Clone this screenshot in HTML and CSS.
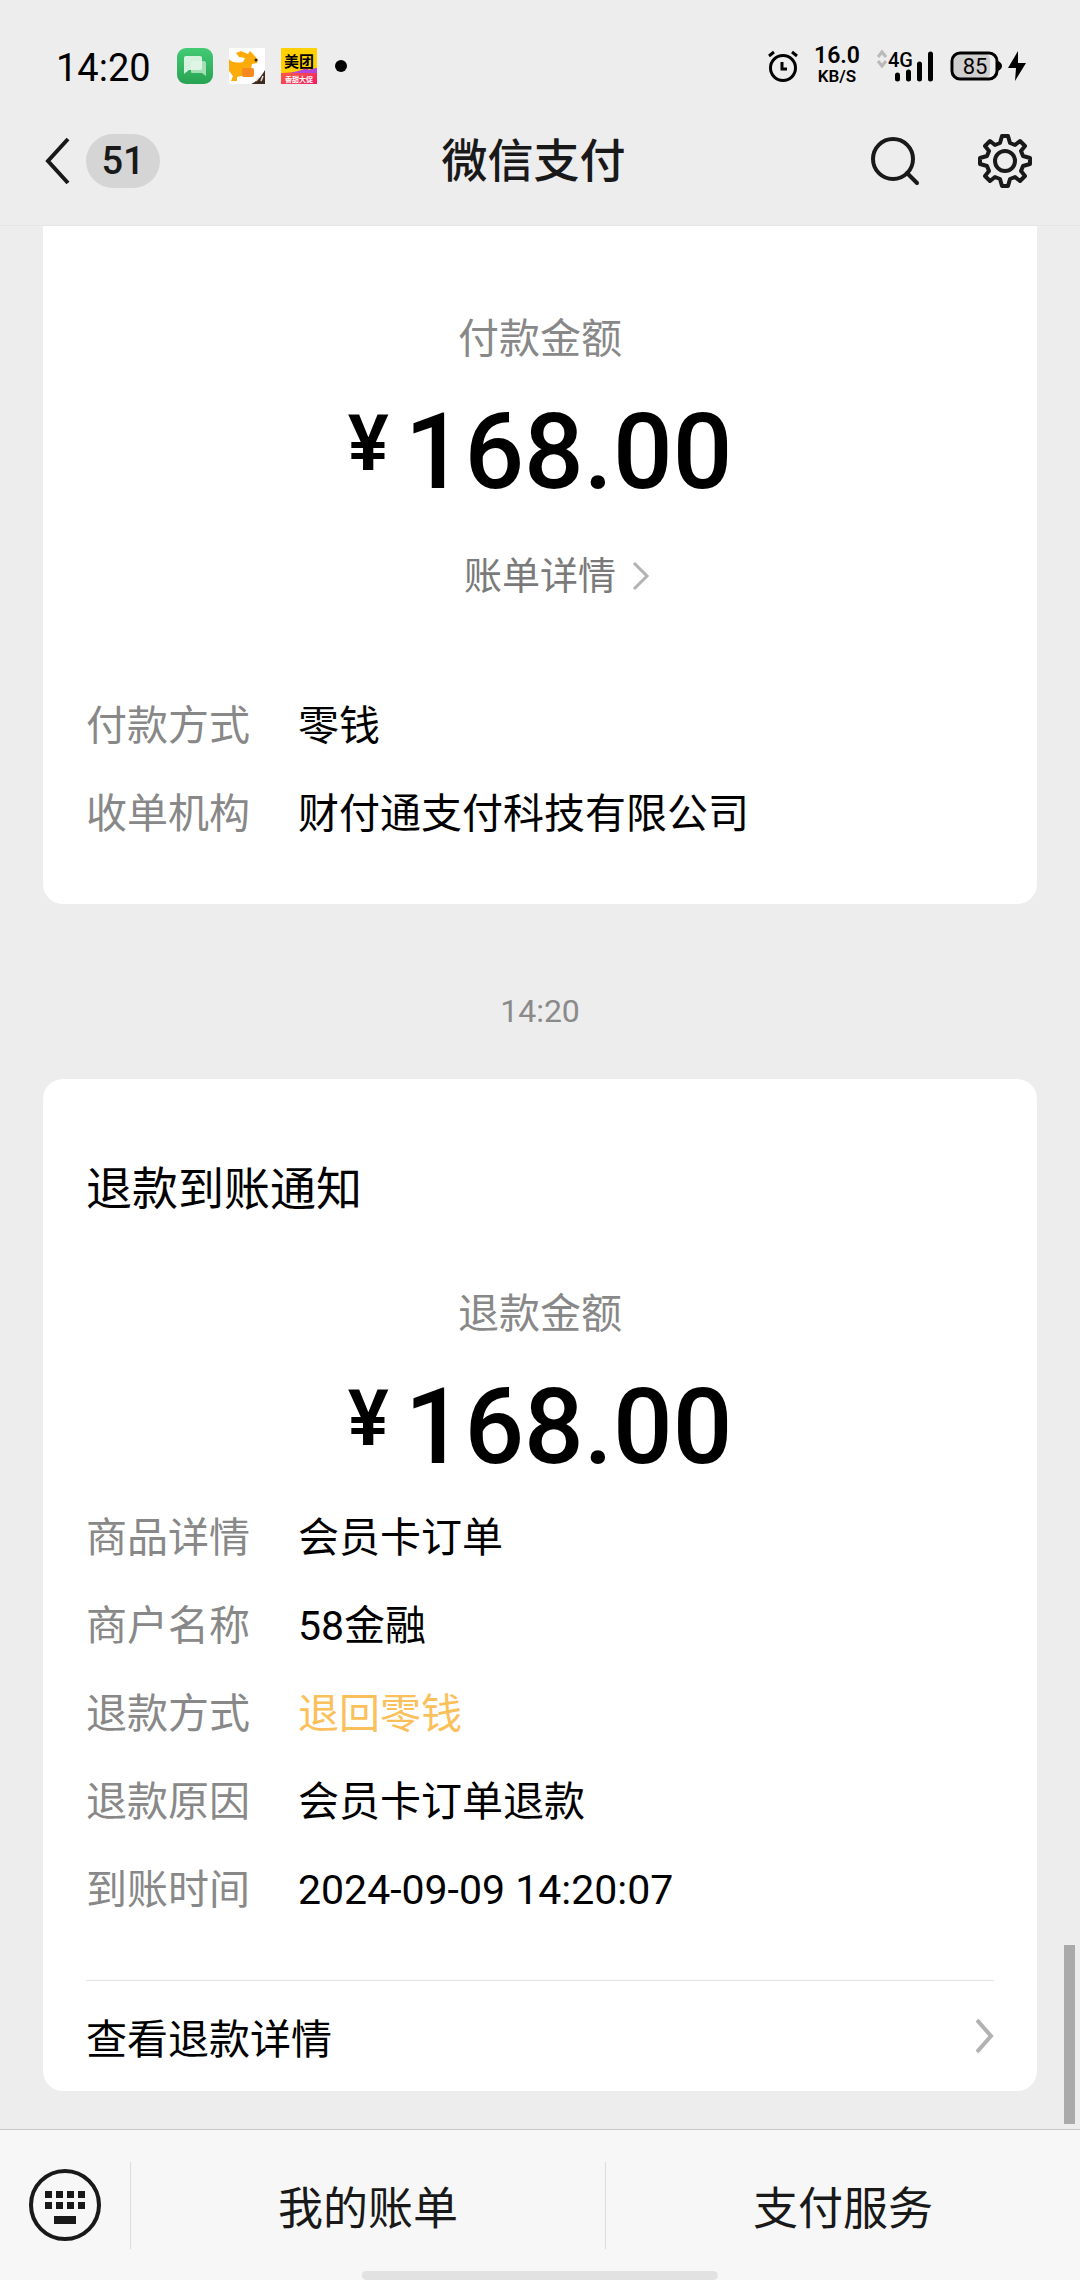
FILE: index.html
```html
<!DOCTYPE html>
<html lang="zh-CN">
<head>
<meta charset="utf-8">
<meta name="viewport" content="width=device-width, initial-scale=1">
<title>微信支付</title>
<link rel="stylesheet" href="styles.css">
</head>
<body>
<div class="screen">
  <div class="status">
    <span class="status-time">14:20</span>
    <div class="status-apps">
      <svg width="36" height="36" viewBox="0 0 36 36" aria-hidden="true">
        <defs><linearGradient id="msg" x1="0" y1="0" x2="0" y2="1"><stop offset="0" stop-color="#43cb74"/><stop offset="1" stop-color="#27a352"/></linearGradient></defs>
        <rect width="36" height="36" rx="9" fill="url(#msg)"/>
        <path d="M15 13h12q2 0 2 2v13l-4-3H15q-1 0-1-1v-9z" fill="#a5dfb6"/>
        <path d="M9 8h14q2 0 2 2v10q0 2-2 2H12l-5 4V10q0-2 2-2z" fill="#e6f7ea" opacity=".9"/>
      </svg>
      <svg width="36" height="36" viewBox="0 0 36 36" aria-hidden="true">
        <rect width="36" height="36" fill="#fff"/>
        <path d="M0 11c3 4 8 4 14 3l2-4-6-1-3-4 5-2 7 3 2-3 4 4 4 5-1 3-5 1-1 5-3 8-7-1-4 1v4H2l2-5-4-5z" fill="#fcab0b"/>
        <rect x="13" y="20" width="12" height="9" rx="2" fill="#f58a1f"/>
        <circle cx="27" cy="12" r="1.500" fill="#33210f"/>
        <path d="M36 22v14H22q8-3 14-14z" fill="#3f2a1e"/>
        <path d="M27 33l3-4m2 4 2-5" stroke="#e7ddd5" stroke-width="1.500"/>
      </svg>
      <svg width="36" height="36" viewBox="0 0 36 36" aria-hidden="true">
        <defs><linearGradient id="mt" x1="0" y1="0" x2="1" y2="1"><stop offset="0" stop-color="#ff6b3a"/><stop offset="1" stop-color="#f01a6a"/></linearGradient></defs>
        <rect width="36" height="36" fill="#ffd100"/>
        <path d="M0 25l17-1 8-4 3 2 8-2v16H0z" fill="url(#mt)"/>
        <path d="M9 25l16-4 3 1 8-2v5z" fill="#b246e0"/>
        <text x="18" y="19" class="app-name">美团</text>
        <text x="18" y="34" class="app-tag">香甜大促</text>
      </svg>
      <svg width="14" height="12" viewBox="0 0 14 12" aria-hidden="true"><circle cx="8" cy="6" r="6"/></svg>
    </div>
    <div class="status-system">
      <svg width="30" height="34" viewBox="0 0 30 34" fill="none" stroke="#000" stroke-width="3" aria-hidden="true">
        <circle cx="15" cy="19" r="12.500"/><path d="M14 13v7h5M1 7l5-4M29 7l-5-4"/>
      </svg>
      <div class="net-speed"><span class="net-value">16.0</span><span class="net-unit">KB/S</span></div>
      <svg width="58" height="34" viewBox="0 0 58 34" aria-hidden="true">
        <path d="M2 8l4-5 4 5M2 12l4 5 4-5" fill="none" stroke="#b9b9b9" stroke-width="3"/>
        <text x="12" y="18" class="signal-type">4G</text>
        <path d="M21.500 26v4M32.500 23v7M43.500 15v15M54.500 5v25" stroke="#000" stroke-width="5" stroke-linecap="round"/>
      </svg>
      <svg width="76" height="34" viewBox="0 0 76 34" aria-hidden="true">
        <rect x="4" y="5" width="36" height="24" rx="5" fill="#cfcfcf"/>
        <rect x="2" y="4" width="45" height="26" rx="8" fill="none" stroke="#000" stroke-width="3"/>
        <path d="M48 12q4 2 4 5t-4 5z"/>
        <text x="25" y="25" class="battery-level">85</text>
        <path d="M68 2L58 19h8l-1 13 11-18h-8z"/>
      </svg>
    </div>
  </div>

  <header class="nav">
    <button class="back" type="button" aria-label="返回">
      <svg width="26" height="48" viewBox="0 0 26 48" fill="none" stroke="#191919" stroke-width="4" aria-hidden="true"><path d="M24 2L4 24l20 22"/></svg>
      <span class="unread">51</span>
    </button>
    <h1 class="nav-title">微信支付</h1>
    <div class="nav-actions">
      <button class="icon-button" type="button" aria-label="搜索">
        <svg width="52" height="56" viewBox="0 0 52 56" fill="none" stroke="#191919" stroke-width="4" stroke-linecap="round" aria-hidden="true"><circle cx="24" cy="26" r="20"/><path d="M38 40l10 10"/></svg>
      </button>
      <button class="icon-button" type="button" aria-label="设置">
        <svg width="56" height="56" viewBox="-28 -28 56 56" fill="none" stroke="#191919" stroke-width="4" stroke-linejoin="round" aria-hidden="true">
          <path d="M3-25L5-18 10-16 15-20 20-15 16-10 18-5 25-3V3L18 5 16 10 20 15 15 20 10 16 5 18 3 25H-3L-5 18-10 16-15 20-20 15-16 10-18 5-25 3V-3L-18-5-16-10-20-15-15-20-10-16-5-18-3-25z"/>
          <circle r="10"/>
        </svg>
      </button>
    </div>
  </header>

  <main class="thread">
    <article class="card card-cut">
      <p class="amount-label">付款金额</p>
      <p class="amount"><span class="currency">¥</span>168.00</p>
      <a class="bill-link" href="#bill"><span class="bill-text">账单详情</span>
        <svg width="18" height="30" viewBox="0 0 18 30" fill="none" stroke="#b2b2b2" stroke-width="3" aria-hidden="true"><path d="M2 2l13 13L2 28"/></svg>
      </a>
      <dl class="details">
        <dt>付款方式</dt><dd>零钱</dd>
        <dt>收单机构</dt><dd>财付通支付科技有限公司</dd>
      </dl>
    </article>

    <time class="stamp">14:20</time>

    <article class="card">
      <h2 class="card-title">退款到账通知</h2>
      <p class="amount-label">退款金额</p>
      <p class="amount"><span class="currency">¥</span>168.00</p>
      <dl class="details">
        <dt>商品详情</dt><dd>会员卡订单</dd>
        <dt>商户名称</dt><dd>58金融</dd>
        <dt>退款方式</dt><dd class="highlight">退回零钱</dd>
        <dt>退款原因</dt><dd>会员卡订单退款</dd>
        <dt>到账时间</dt><dd>2024-09-09 14:20:07</dd>
      </dl>
      <a class="card-footer" href="#refund">查看退款详情
        <svg width="18" height="36" viewBox="0 0 18 36" fill="none" stroke="#b2b2b2" stroke-width="4" aria-hidden="true"><path d="M1 2l14 16L1 34"/></svg>
      </a>
    </article>
    <div class="scroll-thumb"></div>
  </main>

  <nav class="menu">
    <button class="menu-item" type="button" aria-label="键盘">
      <svg width="74" height="74" viewBox="0 0 74 74" fill="#191919" aria-hidden="true">
        <circle cx="37" cy="37" r="34" fill="none" stroke="#191919" stroke-width="4"/>
        <path d="M17 23h7v7h-7zM28 23h7v7h-7zM39 23h7v7h-7zM50 23h7v7h-7zM17 34h7v7h-7zM28 34h7v7h-7zM39 34h7v7h-7zM50 34h7v7h-7zM26 48h22v8H26z"/>
      </svg>
    </button>
    <button class="menu-item" type="button">我的账单</button>
    <button class="menu-item" type="button">支付服务</button>
    <div class="home-indicator"></div>
  </nav>
</div>
</body>
</html>
```
FILE: styles.css
```css
* {
  box-sizing: border-box;
}

body,
h1,
h2,
p,
dl,
dd {
  margin: 0;
}

body {
  background: #ededed;
  color: #000;
  font-family: Roboto, "Noto Sans CJK SC", sans-serif;
  font-size: 41px;
}

button {
  padding: 0;
  border: 0;
  background: none;
  color: inherit;
  font: inherit;
}

a {
  color: inherit;
  text-decoration: none;
}

svg {
  display: block;
  flex: none;
}

.screen {
  display: flex;
  flex-direction: column;
  min-height: 100vh;
}

/* System status bar */
.status {
  display: flex;
  align-items: center;
  height: 96px;
  padding: 36px 54px 0 56px;
}

.status-time {
  margin-right: 26px;
  padding-top: 4px;
  font-size: 38px;
  line-height: 40px;
}

.status-apps {
  display: flex;
  align-items: center;
  gap: 16px;
}

.app-name {
  font-size: 15px;
  font-weight: 700;
  text-anchor: middle;
}

.app-tag {
  fill: #fff;
  font-size: 7px;
  font-weight: 700;
  text-anchor: middle;
}

.status-system {
  display: flex;
  align-items: center;
  gap: 16px;
  margin-left: auto;
}

.net-speed {
  display: flex;
  flex-direction: column;
  align-items: center;
  font-weight: 600;
}

.net-value {
  font-size: 23px;
  line-height: 20px;
}

.net-unit {
  font-size: 17px;
  line-height: 20px;
}

.signal-type {
  font-size: 20px;
  font-weight: 500;
}

.battery-level {
  font-size: 22px;
  text-anchor: middle;
}

/* Title bar */
.nav {
  display: grid;
  grid-template-columns: 1fr auto 1fr;
  align-items: center;
  height: 130px;
  padding: 0 47px 0 44px;
  border-bottom: 1px solid #e5e5e5;
  color: #191919;
}

.back {
  display: flex;
  align-items: center;
  gap: 16px;
}

.unread {
  width: 74px;
  border-radius: 27px;
  background: #d5d5d5;
  font-size: 38px;
  font-weight: 500;
  line-height: 54px;
  text-align: center;
}

.nav-title {
  padding-right: 10px;
  font-size: 46px;
  font-weight: 500;
  line-height: 60px;
}

.nav-actions {
  display: flex;
  justify-content: flex-end;
  gap: 56px;
}

/* Message thread */
.thread {
  position: relative;
  display: flex;
  flex: 1;
  flex-direction: column;
  padding: 0 43px 38px;
}

.card {
  padding: 80px 43px 0;
  border-radius: 20px;
  background: #fff;
}

.card-cut {
  padding-top: 83px;
  padding-bottom: 46px;
  border-radius: 0 0 20px 20px;
}

.card-title {
  margin-bottom: 65px;
  font-size: 46px;
  font-weight: 400;
  line-height: 60px;
}

.amount-label {
  color: #888;
  line-height: 60px;
  text-align: center;
}

.amount {
  display: flex;
  justify-content: center;
  gap: 16px;
  margin-top: 30px;
  font-size: 105px;
  font-weight: 500;
  line-height: 108px;
}

.currency {
  font-size: 77px;
  font-weight: 600;
  line-height: 90px;
}

.bill-link {
  display: grid;
  grid-template-columns: 1fr auto 1fr;
  gap: 16px;
  align-items: center;
  margin: 41px 0 78px;
  color: #7a7a7a;
  font-size: 38px;
  line-height: 56px;
}

.bill-text {
  grid-column: 2;
}

.details {
  display: grid;
  grid-template-columns: max-content 1fr;
  column-gap: 48px;
  margin-top: 12px;
  line-height: 88px;
}

.details dt {
  color: #888;
}

.details .highlight {
  color: #fbc05a;
}

.stamp {
  margin: 87px 0 48px;
  color: #8a8a8a;
  font-size: 32px;
  line-height: 40px;
  text-align: center;
}

.card-footer {
  display: flex;
  align-items: center;
  justify-content: space-between;
  height: 111px;
  margin-top: 46px;
  border-top: 1px solid #e2e2e2;
}

.scroll-thumb {
  position: absolute;
  right: 5px;
  bottom: 5px;
  width: 11px;
  height: 179px;
  background: #aaa;
}

/* Bottom menu */
.menu {
  position: relative;
  display: grid;
  grid-template-columns: 130px 1fr 1fr;
  align-items: center;
  height: 151px;
  border-top: 1px solid #c8c8c8;
  background: #f7f7f7;
  color: #191919;
  font-size: 45px;
}

.menu-item {
  display: flex;
  align-items: center;
  justify-content: center;
  height: 87px;
}

.menu-item + .menu-item {
  border-left: 1px solid #dcdcdc;
}

.home-indicator {
  position: absolute;
  bottom: 0;
  left: 50%;
  width: 33%;
  height: 9px;
  border-radius: 5px;
  background: #e2e2e2;
  transform: translateX(-50%);
}
```
